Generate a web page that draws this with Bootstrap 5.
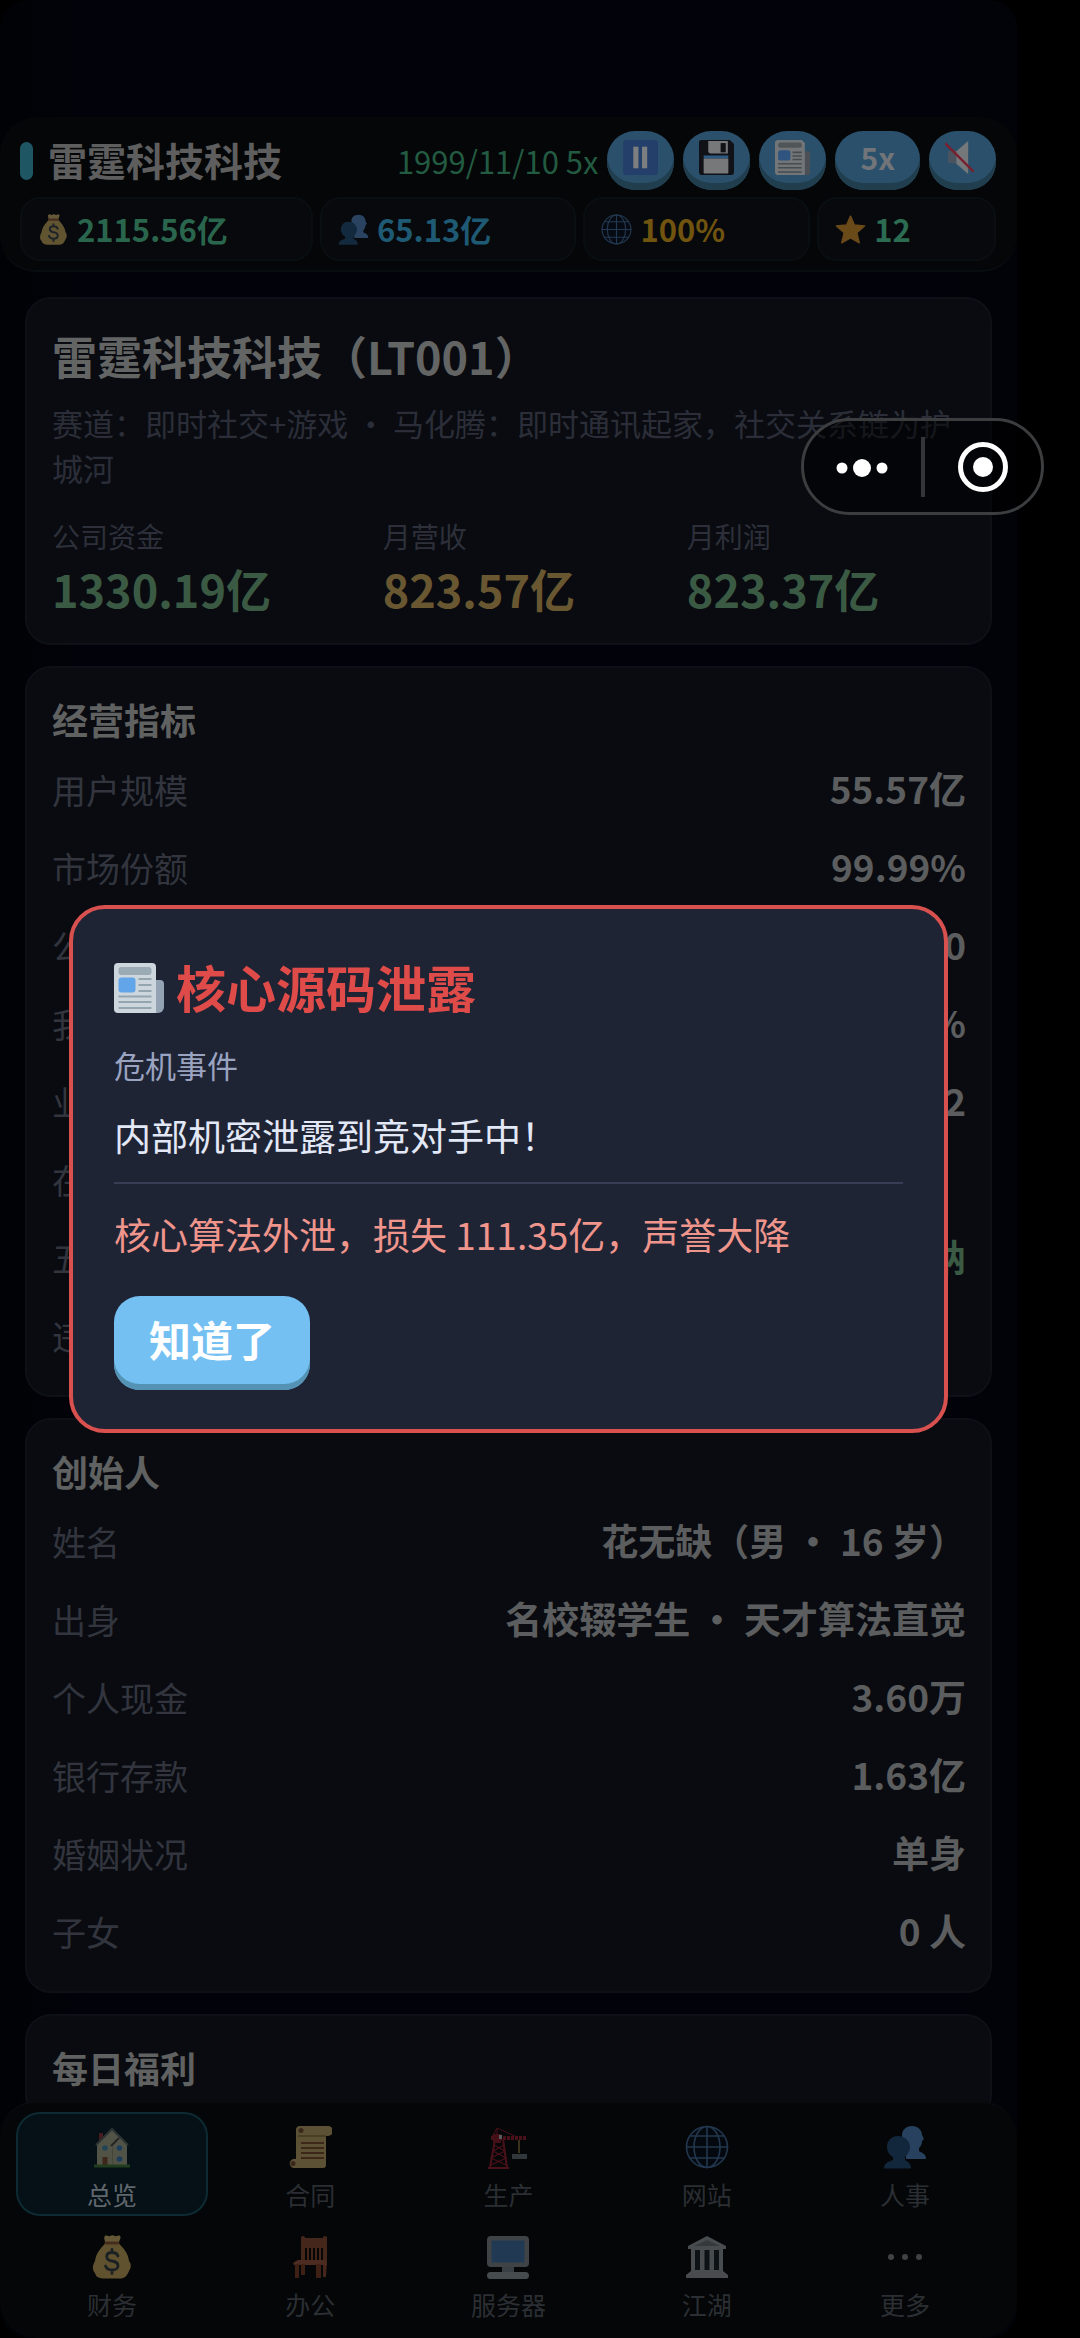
<!DOCTYPE html>
<html lang="zh-CN">
<head>
<meta charset="utf-8">
<meta name="viewport" content="width=device-width, initial-scale=1">
<title>雷霆科技科技</title>
<link href="https://cdn.jsdelivr.net/npm/bootstrap@5.3.0/dist/css/bootstrap.min.css" rel="stylesheet">
<style>
  body { background: #000; font-family: "Noto Sans CJK SC", sans-serif; color: #606060; padding-right: 63px; }
  .app-shell { height: 100vh; background: linear-gradient(90deg, #010205, #02020a 8%, #02020a 92%, #020308); padding-top: 117px; border-radius: 28px; }

  .top-panel { background: #040607; border: 1px solid #080d10; border-width: 0 0 2px; border-radius: 36px; padding: 14px 21px 9px 20px; }
  .tools { gap: 9px; height: 59px; }
  .accent-bar { width: 13px; height: 38px; border-radius: 7px; background: #1f5664; }
  .firm-name { font-size: 39px; line-height: 52px; font-weight: 700; color: #5e5e5f; margin: 0 0 3px 6px; }
  .game-date { font-size: 31px; line-height: 44px; color: #235b42; }
  .tool-btn { height: 59px; padding: 0 16px 7px; border: 0; border-radius: 28px; background: #2b506b; box-shadow: inset 0 -7px 0 #213e4e; color: #717579; font-size: 30px; line-height: 48px; font-weight: 700; }
  .tool-btn svg { width: 35px; height: 35px; display: block; }
  .tool-wide { padding: 0 25px 7px; }

  .stats { gap: 7px; margin-top: 7px; }
  .stat { flex: 1 1 auto; height: 64px; gap: 8px; padding: 0 16px; background: #07090c; border: 2px solid #090e12; border-radius: 20px; font-size: 31px; font-weight: 700; }
  .stat svg { width: 31px; height: 31px; opacity: .4; }
  .c-mint { color: #2a664d; } .c-sky { color: #1f5a74; } .c-gold { color: #70540f; } .c-jade { color: #2b6c52; }
  .c-leaf { color: #3b5a44; } .c-sand { color: #685731; }

  .feed { padding: 25px 25px 0; gap: 21px; }
  .panel { background: #090b10; border: 2px solid #0e1018; border-radius: 26px; padding: 24px 24px 21px 25px; }
  .panel-title { font-size: 45px; line-height: 66px; font-weight: 700; margin: 0 0 11px; color: #636464; }
  .panel-note { font-size: 31px; line-height: 45px; color: #2b2e38; margin: 0 0 26px; }
  .figures { gap: 25px; }
  .figures > div { flex: 1 1 auto; }
  .fig-label { font-size: 28px; line-height: 40px; color: #2d303a; }
  .fig-value { font-size: 45px; line-height: 66px; font-weight: 700; }
  .section-title { font-size: 36px; line-height: 54px; font-weight: 700; margin: 0 0 4px; color: #606161; }
  .info-row { height: 78px; }
  .info-row dt { font-size: 34px; font-weight: 400; color: #32353e; }
  .info-row dd { font-size: 37px; font-weight: 700; color: #5c5d5e; margin: 0; }
  .info-row dd.c-leaf { color: #3b5a44; }

  .tab-bar { background: #040607; border-top: 2px solid #080c0f; border-radius: 36px; padding: 9px 16px 12px; }
  .tab-grid { display: grid; grid-template-columns: repeat(5, 1fr); gap: 6px; }
  .tab-link { height: 104px; padding-top: 11px; border: 2px solid transparent; border-radius: 24px; color: #2b2e33; text-decoration: none; font-size: 25px; line-height: 36px; }
  .tab-link svg { width: 44px; height: 44px; opacity: .4; margin-bottom: 7px; }
  .tab-link.on { background: #051116; border-color: #0e2a33; color: #60676d; }

  .capsule { top: 418px; right: 36px; width: 243px; height: 97px; border: 3px solid #3c3d3f; border-radius: 49px; background: rgba(0, 0, 0, .5); z-index: 5; }
  .capsule button { flex: 1 1 0; border: 0; padding: 0; background: none; }
  .capsule-line { width: 4px; height: 60px; background: #343538; }

  .veil { padding: 0 69px; }
  .notice { background: #1f2435; border: 4px solid #d8514f; border-radius: 36px; padding: 41px 41px 39px; color: #e3e8f7; }
  .notice h2 { font-size: 50px; line-height: 72px; font-weight: 700; color: #de4b48; margin: 0; gap: 12px; }
  .notice h2 svg { width: 50px; height: 50px; margin-top: 4px; }
  .notice-kind { font-size: 31px; line-height: 44px; color: #9aa3c0; margin: 21px 0 0; }
  .notice-text { font-size: 37px; line-height: 56px; margin: 20px 0 0; }
  .notice-cost { font-size: 37px; line-height: 56px; color: #f0958c; border-top: 2px solid #373d54; padding-top: 22px; margin: 19px 0 0; }
  .ok-btn { height: 94px; margin-top: 34px; padding: 0 35px 9px; border: 0; border-radius: 26px; background: #74c0f2; box-shadow: inset 0 -6px 0 #5593b4; color: #fff; font-size: 42px; font-weight: 700; }
</style>
</head>
<body>

<svg width="0" height="0" class="position-absolute" aria-hidden="true">
  <symbol id="i-bag" viewBox="0 0 44 44">
    <path d="M15 1c2-1.500 3 1 5 0s3-1 5 0 4-1.500 5 0c1.500 1-.5 4-1.500 7H15.500C14.500 5 13.500 2 15 1z" fill="#f5d27c"/>
    <path d="M15.500 8h13c5 5 10 11 10.500 18 2 2 2.500 6 .5 9-2 4-3 8-9 8.500H13C7 43 6 41 5 38c-2.500-2-3-7 0-12C6 18 11 13 15.500 8z" fill="#e9c46a"/>
    <rect x="14.500" y="6.500" width="15" height="3" rx="1.500" fill="#a8673c"/>
    <path d="M28 21c-1-3-3.500-3.500-6-3.500-7 0-7 7.500 0 8.500 8 1 8 9 0 9-3.500 0-5.500-1.500-6.500-4M22 14.500v3M22 35v3.500" fill="none" stroke="#3f4a4f" stroke-width="2.800" stroke-linecap="round"/>
  </symbol>
  <symbol id="i-people" viewBox="0 0 44 44">
    <path d="M29 1c6 0 10 4 10 9l2 4-2 2c0 4-2 6-3 7v3c2 2 7 2 7 8H23V20c-3-4-4-7-4-10 0-5 4-9 10-9z" fill="#5f9be0"/>
    <path d="M15 11c7 0 12 5 12 11 0 5-3 8-5 10v3c3 2 6 3 6 8.500H1C1 38 5 37 10 35v-3C6 30 4 26 4 22 4 16 8 11 15 11z" fill="#27598a"/>
  </symbol>
  <symbol id="i-globe" viewBox="0 0 44 44">
    <g fill="none" stroke="#4f80b8" stroke-width="1.600"><circle cx="22" cy="22" r="20.500" fill="#050d1c"/><ellipse cx="22" cy="22" rx="13" ry="20.500"/><path d="M22 1v42M1 22h42M5 11h34M5 33h34"/></g>
  </symbol>
  <symbol id="i-star" viewBox="0 0 44 44">
    <path d="M22 3l5.500 12.500L42 17 31 26.500 34.500 41 22 34 9.500 41 13 26.500 2 17l14.500-1.500z" fill="#ffab2e" stroke="#ffab2e" stroke-width="2" stroke-linejoin="round"/>
  </symbol>
  <symbol id="i-pause" viewBox="0 0 34 34">
    <rect width="34" height="34" rx="3" fill="#24406a"/><rect x="10" y="6.500" width="5" height="21" fill="#7c7e80"/><rect x="18.500" y="6.500" width="5" height="21" fill="#7c7e80"/>
  </symbol>
  <symbol id="i-disk" viewBox="0 0 34 34">
    <path d="M2 0h28l4 4v27a3 3 0 0 1-3 3H3a3 3 0 0 1-3-3V2a2 2 0 0 1 2-2z" fill="#111118"/>
    <path d="M9 1h19v12H11a2 2 0 0 1-2-2z" fill="#77787a"/><rect x="21" y="3" width="5" height="9" fill="#111118"/>
    <rect x="4.500" y="15" width="24" height="3" fill="#2c5a80"/><rect x="4.500" y="18" width="24" height="14.500" rx="1" fill="#77787a"/>
  </symbol>
  <symbol id="i-paper-dim" viewBox="0 0 34 34">
    <path d="M28 11h4.500a2 2 0 0 1 2 2v18a3 3 0 0 1-3 3H26z" fill="#4b5056"/>
    <path d="M3 0h23l3 3v31H3a3 3 0 0 1-3-3V3a3 3 0 0 1 3-3z" fill="#737678"/>
    <rect x="3" y="2.500" width="23" height="5" rx="2" fill="#505558"/><rect x="3" y="10" width="12" height="10" rx="2.500" fill="#2f5480"/>
    <path d="M17 12h9M17 15.500h9M17 19h9M3 23h23M3 27h23M3 31h23" stroke="#464b4f" stroke-width="1.500"/>
  </symbol>
  <symbol id="i-paper" viewBox="0 0 50 50">
    <path d="M38 17h8a4 4 0 0 1 4 4v23a6 6 0 0 1-6 6h-8z" fill="#94a3b3"/>
    <path d="M4 0h34a4 4 0 0 1 4 4v46H4a4 4 0 0 1-4-4V4a4 4 0 0 1 4-4z" fill="#cdd6dd"/>
    <rect x="4.500" y="4" width="33" height="8" rx="3" fill="#9aabb6"/><rect x="4.500" y="14.500" width="17" height="15" rx="3" fill="#62a5e8"/>
    <path d="M24.500 16h13M24.500 22h13M24.500 28h13M4.500 33.500h33M4.500 39h33M4.500 45h33" stroke="#94a5b0" stroke-width="2"/>
  </symbol>
  <symbol id="i-mute" viewBox="0 0 34 34">
    <path d="M3 11l8-1v13l-8-1z" fill="#4a5460"/><path d="M11 11L22.500 1v32L11 23z" fill="#74787b"/><path d="M1 4l26 26" stroke="#7a1f30" stroke-width="2.400" stroke-linecap="round"/>
  </symbol>
  <symbol id="i-house" viewBox="0 0 44 44">
    <path d="M9 8h4v9H9z" fill="#a52a2a"/><path d="M7 19L22 5l15 14v22H7z" fill="#c4b690"/>
    <path d="M6 20L22 4l16 16" fill="none" stroke="#66665f" stroke-width="2"/><path d="M21 21l8-8" stroke="#5a4038" stroke-width="2"/>
    <path d="M22.500 21v19" stroke="#a8976f"/><circle cx="15" cy="23" r="2.800" fill="#4b90b4"/><circle cx="29.500" cy="23" r="2.800" fill="#427fc8"/><circle cx="29.500" cy="34" r="2.800" fill="#427fc8"/>
    <rect x="12.500" y="32" width="5" height="9" fill="#8f4a22"/><path d="M4 41h36" stroke="#4f7d2a" stroke-width="3"/>
  </symbol>
  <symbol id="i-scroll" viewBox="0 0 44 44">
    <path d="M12 1h28a4.500 4.500 0 0 1 0 10h-2v29a3 3 0 0 1-3 3H5a4.500 4.500 0 1 1 3-9V4a4 4 0 0 1 4-3z" fill="#e2c27a"/>
    <path d="M10 11h28" stroke="#a58444" stroke-width="1.500"/><circle cx="13" cy="5.500" r="2.500" fill="#8a5a3c"/><circle cx="5" cy="38.500" r="2.500" fill="#8a5a3c"/>
    <path d="M13 18h23M13 23h23M13 28h23M13 33h23" stroke="#935a33" stroke-width="2.200"/>
  </symbol>
  <symbol id="i-crane" viewBox="0 0 44 44">
    <g fill="none" stroke="#b02236" stroke-width="2"><path d="M9 14L4 43M17 14l4 29M2 43h21"/><path d="M8 20l11 6-14 7 15 7M18 20L7 26l13 7-15 7" stroke-width="1.200"/><path d="M11 4v8M11 3l-5 9M11 3l20 9" stroke-width="1"/><path d="M5 13h36" stroke-width="4" stroke-dasharray="3 1"/></g>
    <path d="M7 9h8v9H7z" fill="#a81d30"/><path d="M13 10h3v4h-3z" fill="#d9dde0"/><path d="M33 15v13" stroke="#b89a50" stroke-width="1.500"/><path d="M26 29h15v5H26z" fill="#77818a"/>
  </symbol>
  <symbol id="i-chair" viewBox="0 0 44 44">
    <path d="M13 2q2-2 4 0v1h18V2q2-2 4 0v25l-1 15h-3V30H17v-3h-4z" fill="#a85638"/><path d="M17 13h18v12H17z" fill="#0b0605"/>
    <path d="M20 13v12M24 13v12M28 13v12M32 13v12" stroke="#a85638" stroke-width="2"/>
    <path d="M10 25h28l1 5H6c-2-3 1-3 4-5z" fill="#b86448"/><path d="M7 29h4v14H7zM13 29h4v11h-4zM28 29h5v14h-5z" fill="#98482c"/>
  </symbol>
  <symbol id="i-screen" viewBox="0 0 44 44">
    <rect x="1" y="1" width="42" height="31" rx="4" fill="#98a0a6"/><rect x="5.500" y="5.500" width="33" height="22" rx="1" fill="#4f86c4"/>
    <path d="M16 32h12v5H16z" fill="#8a949b"/><rect x="1" y="37" width="42" height="7" rx="3.500" fill="#aab2b8"/>
  </symbol>
  <symbol id="i-hall" viewBox="0 0 44 44">
    <path d="M22 1l19 10v3h-3v22l5 4v3H1v-3l5-4V14H3v-3z" fill="#b0b5b8"/><path d="M9 11l13-6 13 6z" fill="#7d878c"/>
    <path d="M10 15h5v20h-5zM19.500 15h5v20h-5zM29 15h5v20h-5z" fill="#18242c"/>
  </symbol>
  <symbol id="i-more" viewBox="0 0 44 44">
    <g fill="#9a9da1"><circle cx="8" cy="22" r="3"/><circle cx="22" cy="22" r="3"/><circle cx="36" cy="22" r="3"/></g>
  </symbol>
</svg>

<div class="app-shell position-relative overflow-hidden">
  <header class="top-panel">
    <div class="tools d-flex align-items-center">
      <span class="accent-bar"></span>
      <h1 class="firm-name">雷霆科技科技</h1>
      <span class="game-date ms-auto">1999/11/10 5x</span>
      <button type="button" class="tool-btn" aria-label="暂停"><svg><use href="#i-pause"/></svg></button>
      <button type="button" class="tool-btn" aria-label="保存"><svg><use href="#i-disk"/></svg></button>
      <button type="button" class="tool-btn" aria-label="新闻"><svg><use href="#i-paper-dim"/></svg></button>
      <button type="button" class="tool-btn tool-wide">5x</button>
      <button type="button" class="tool-btn" aria-label="静音"><svg><use href="#i-mute"/></svg></button>
    </div>
    <div class="stats d-flex">
      <div class="stat d-flex align-items-center c-mint"><svg><use href="#i-bag"/></svg>2115.56亿</div>
      <div class="stat d-flex align-items-center c-sky"><svg><use href="#i-people"/></svg>65.13亿</div>
      <div class="stat d-flex align-items-center c-gold"><svg><use href="#i-globe"/></svg>100%</div>
      <div class="stat d-flex align-items-center c-jade"><svg><use href="#i-star"/></svg>12</div>
    </div>
  </header>

  <main class="feed d-flex flex-column">
    <section class="panel">
      <h2 class="panel-title">雷霆科技科技（LT001）</h2>
      <p class="panel-note">赛道：即时社交+游戏 · 马化腾：即时通讯起家，社交关系链为护城河</p>
      <div class="figures d-flex">
        <div><div class="fig-label">公司资金</div><div class="fig-value c-leaf">1330.19亿</div></div>
        <div><div class="fig-label">月营收</div><div class="fig-value c-sand">823.57亿</div></div>
        <div><div class="fig-label">月利润</div><div class="fig-value c-leaf">823.37亿</div></div>
      </div>
    </section>

    <section class="panel">
      <h2 class="section-title">经营指标</h2>
      <dl class="mb-0">
        <div class="info-row d-flex justify-content-between align-items-center"><dt>用户规模</dt><dd>55.57亿</dd></div>
        <div class="info-row d-flex justify-content-between align-items-center"><dt>市场份额</dt><dd>99.99%</dd></div>
        <div class="info-row d-flex justify-content-between align-items-center"><dt>公</dt><dd>0</dd></div>
        <div class="info-row d-flex justify-content-between align-items-center"><dt>我</dt><dd>%</dd></div>
        <div class="info-row d-flex justify-content-between align-items-center"><dt>业</dt><dd>2</dd></div>
        <div class="info-row d-flex justify-content-between align-items-center"><dt>在</dt><dd></dd></div>
        <div class="info-row d-flex justify-content-between align-items-center"><dt>五</dt><dd class="c-leaf">纳</dd></div>
        <div class="info-row d-flex justify-content-between align-items-center"><dt>违</dt><dd></dd></div>
      </dl>
    </section>

    <section class="panel">
      <h2 class="section-title">创始人</h2>
      <dl class="mb-0">
        <div class="info-row d-flex justify-content-between align-items-center"><dt>姓名</dt><dd>花无缺（男 · 16 岁）</dd></div>
        <div class="info-row d-flex justify-content-between align-items-center"><dt>出身</dt><dd>名校辍学生 · 天才算法直觉</dd></div>
        <div class="info-row d-flex justify-content-between align-items-center"><dt>个人现金</dt><dd>3.60万</dd></div>
        <div class="info-row d-flex justify-content-between align-items-center"><dt>银行存款</dt><dd>1.63亿</dd></div>
        <div class="info-row d-flex justify-content-between align-items-center"><dt>婚姻状况</dt><dd>单身</dd></div>
        <div class="info-row d-flex justify-content-between align-items-center"><dt>子女</dt><dd>0 人</dd></div>
      </dl>
    </section>

    <section class="panel">
      <h2 class="section-title">每日福利</h2>
    </section>
  </main>

  <nav class="tab-bar position-absolute bottom-0 start-0 end-0">
    <div class="tab-grid">
      <a href="#" class="tab-link on d-flex flex-column align-items-center"><svg><use href="#i-house"/></svg>总览</a>
      <a href="#" class="tab-link d-flex flex-column align-items-center"><svg><use href="#i-scroll"/></svg>合同</a>
      <a href="#" class="tab-link d-flex flex-column align-items-center"><svg><use href="#i-crane"/></svg>生产</a>
      <a href="#" class="tab-link d-flex flex-column align-items-center"><svg><use href="#i-globe"/></svg>网站</a>
      <a href="#" class="tab-link d-flex flex-column align-items-center"><svg><use href="#i-people"/></svg>人事</a>
      <a href="#" class="tab-link d-flex flex-column align-items-center"><svg><use href="#i-bag"/></svg>财务</a>
      <a href="#" class="tab-link d-flex flex-column align-items-center"><svg><use href="#i-chair"/></svg>办公</a>
      <a href="#" class="tab-link d-flex flex-column align-items-center"><svg><use href="#i-screen"/></svg>服务器</a>
      <a href="#" class="tab-link d-flex flex-column align-items-center"><svg><use href="#i-hall"/></svg>江湖</a>
      <a href="#" class="tab-link d-flex flex-column align-items-center"><svg><use href="#i-more"/></svg>更多</a>
    </div>
  </nav>

  <div class="veil position-absolute top-0 start-0 w-100 h-100 d-flex align-items-center">
    <div class="notice w-100" role="dialog" aria-labelledby="notice-title">
      <h2 class="d-flex align-items-center" id="notice-title"><svg><use href="#i-paper"/></svg>核心源码泄露</h2>
      <p class="notice-kind">危机事件</p>
      <p class="notice-text">内部机密泄露到竞对手中！</p>
      <p class="notice-cost">核心算法外泄，损失 111.35亿，声誉大降</p>
      <button type="button" class="ok-btn">知道了</button>
    </div>
  </div>
</div>

<div class="capsule position-absolute d-flex align-items-center">
  <button type="button" aria-label="更多"><svg width="52" height="22" viewBox="0 0 52 22" fill="#fff"><circle cx="6" cy="11" r="5.500"/><circle cx="26" cy="11" r="9"/><circle cx="46" cy="11" r="5.500"/></svg></button>
  <span class="capsule-line"></span>
  <button type="button" aria-label="关闭"><svg width="52" height="52" viewBox="0 0 52 52"><circle cx="26" cy="26" r="22.500" fill="none" stroke="#fff" stroke-width="5"/><circle cx="26" cy="26" r="10" fill="#fff"/></svg></button>
</div>

<script src="https://cdn.jsdelivr.net/npm/bootstrap@5.3.0/dist/js/bootstrap.bundle.min.js"></script>
</body>
</html>
